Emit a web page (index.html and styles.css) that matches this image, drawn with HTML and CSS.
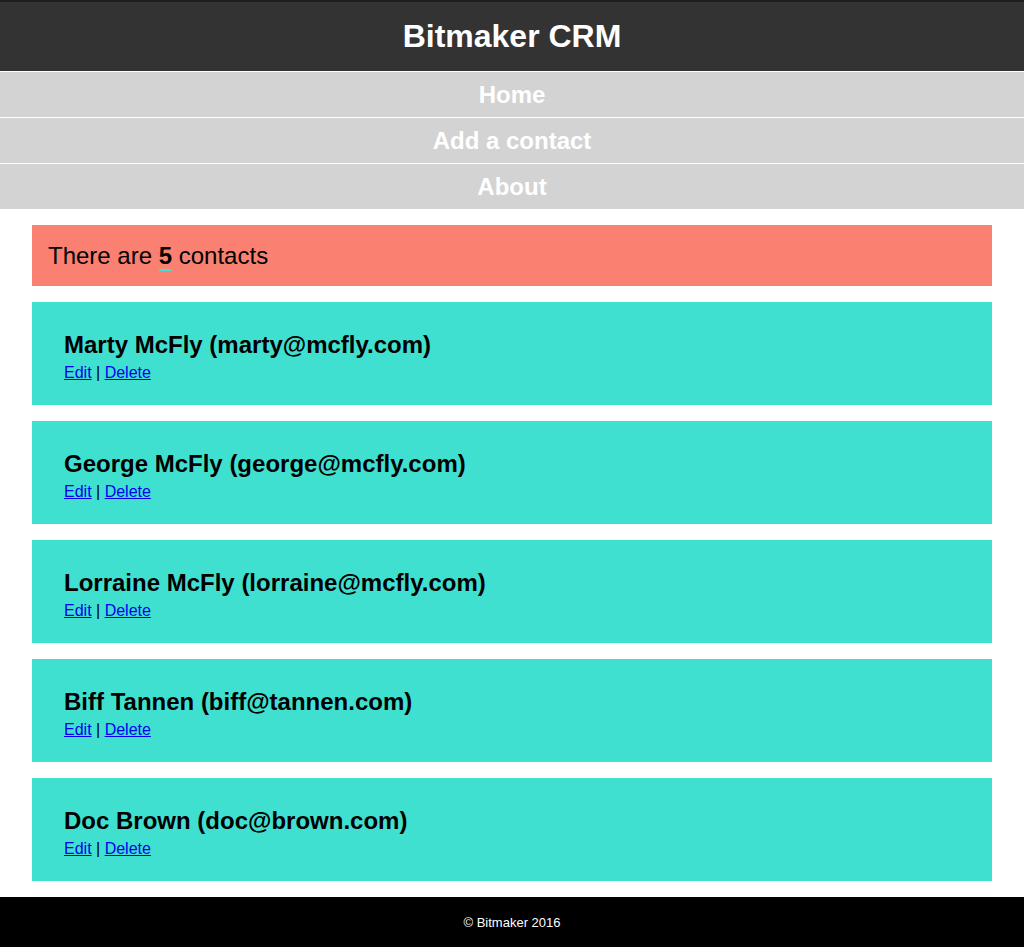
FILE: index.html
```html
<!DOCTYPE html>
<html>
<head>
<meta charset="utf-8">
<title>Bitmaker CRM</title>
<link rel="stylesheet" href="styles.css">
</head>
<body>
<header class="site-header">
  <h1 class="site-title">Bitmaker CRM</h1>
</header>
<nav class="main-nav">
  <a class="nav-item" href="#">Home</a>
  <a class="nav-item" href="#">Add a contact</a>
  <a class="nav-item" href="#">About</a>
</nav>
<main class="content">
  <div class="count-banner">There are <strong class="count">5</strong> contacts</div>
  <div class="contact-card">
    <h3 class="contact-name">Marty McFly (marty@mcfly.com)</h3>
    <div class="contact-actions"><a href="#">Edit</a> | <a href="#">Delete</a></div>
  </div>
  <div class="contact-card">
    <h3 class="contact-name">George McFly (george@mcfly.com)</h3>
    <div class="contact-actions"><a href="#">Edit</a> | <a href="#">Delete</a></div>
  </div>
  <div class="contact-card">
    <h3 class="contact-name">Lorraine McFly (lorraine@mcfly.com)</h3>
    <div class="contact-actions"><a href="#">Edit</a> | <a href="#">Delete</a></div>
  </div>
  <div class="contact-card">
    <h3 class="contact-name">Biff Tannen (biff@tannen.com)</h3>
    <div class="contact-actions"><a href="#">Edit</a> | <a href="#">Delete</a></div>
  </div>
  <div class="contact-card">
    <h3 class="contact-name">Doc Brown (doc@brown.com)</h3>
    <div class="contact-actions"><a href="#">Edit</a> | <a href="#">Delete</a></div>
  </div>
</main>
<footer class="site-footer">© Bitmaker 2016</footer>
</body>
</html>
```
FILE: styles.css
```css
html, body {
  margin: 0;
  padding: 0;
}
body {
  font-family: "Liberation Sans", Arial, Helvetica, sans-serif;
  color: #000;
  background: #fff;
}
.site-header {
  background: #333333;
  border-top: 2px solid #1e1e1e;
  text-align: center;
}
.site-title {
  margin: 0;
  font-size: 32px;
  line-height: 69px;
  font-weight: bold;
  color: #fff;
}
.main-nav {
  display: flex;
  flex-direction: column;
}
.nav-item {
  display: block;
  background: #d3d3d3;
  border-top: 1px solid #fff;
  color: #fff;
  text-decoration: none;
  text-align: center;
  font-weight: bold;
  font-size: 24px;
  line-height: 45px;
}
.content {
  padding: 16px 32px;
  display: flex;
  flex-direction: column;
  gap: 16px;
}
.count-banner {
  background: #fa8072;
  padding: 16px;
  font-size: 24px;
  line-height: 29px;
}
.count {
  border-bottom: 2px solid #40e0d0;
}
.contact-card {
  background: #40e0d0;
  padding: 29px 32px 23px;
}
.contact-name {
  margin: 0 0 5px;
  font-size: 24px;
  font-weight: bold;
  line-height: 27px;
}
.contact-actions {
  font-size: 16px;
  line-height: 19px;
}
.contact-actions a {
  color: #0000ee;
}
.site-footer {
  background: #000;
  color: #fff;
  text-align: center;
  font-size: 13px;
  line-height: 18px;
  padding: 17px 0 15px;
}
```
